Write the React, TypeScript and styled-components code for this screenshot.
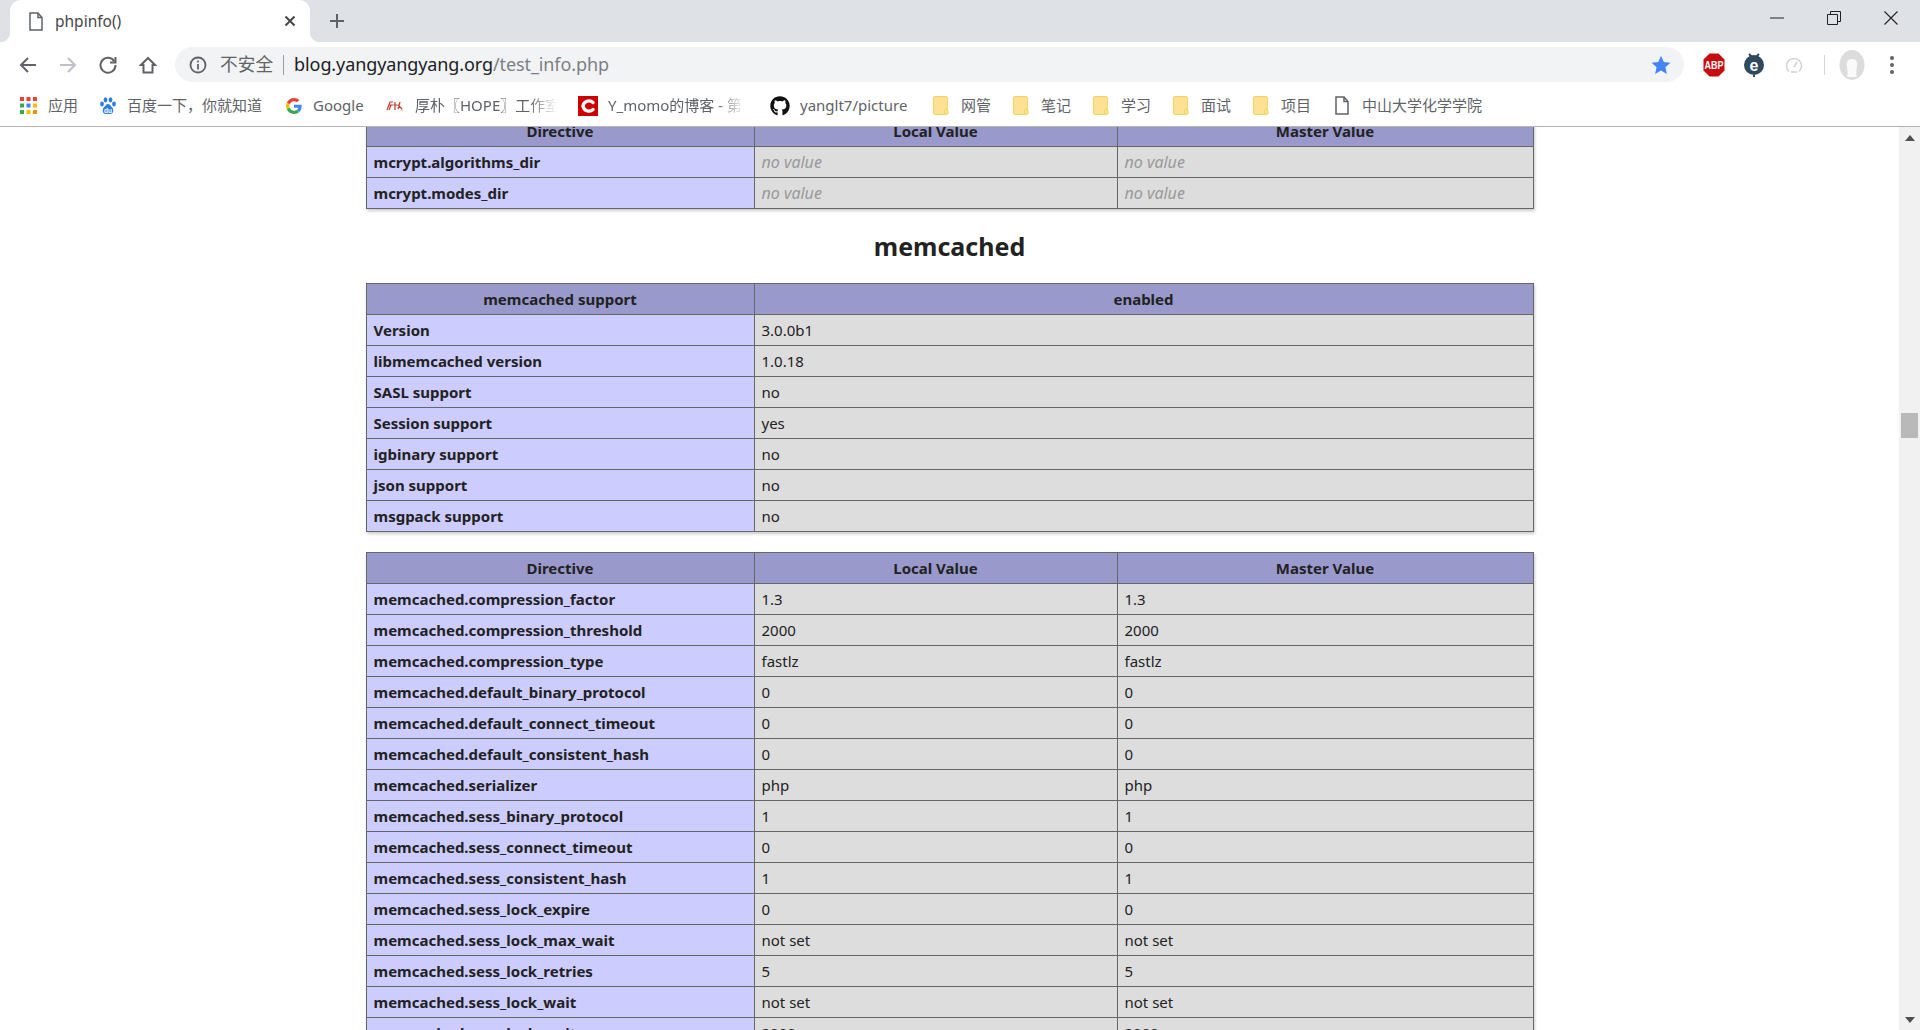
import React from "react";
import styled, { createGlobalStyle } from "styled-components";
import { FaGithub } from "react-icons/fa";

const Global = createGlobalStyle`
  html, body { margin: 0; padding: 0; height: 1030px; overflow: hidden; background: #fff; }
  * { box-sizing: border-box; }
  body { font-family: "Noto Sans", "Noto Sans CJK SC", sans-serif; }
`;

const Shell = styled.div`display: flex; flex-direction: column; width: 1920px; height: 1030px; overflow: hidden;`;

const TabStrip = styled.div`display: flex; align-items: stretch; height: 42px; padding-right: 1px; background: #dee1e6; flex: none;`;
const Tab = styled.div`
  position: relative; display: flex; align-items: center; width: 300px; margin-left: 10px; padding-left: 18px;
  background: #fff; border-radius: 11px 11px 0 0;
  &::before, &::after { content: ""; position: absolute; bottom: 0; width: 10px; height: 10px; }
  &::before { left: -10px; background: radial-gradient(circle at 0 0, #dee1e6 10px, #fff 10.5px); }
  &::after { right: -10px; background: radial-gradient(circle at 100% 0, #dee1e6 10px, #fff 10.5px); }
`;
const TabTitle = styled.span`margin-left: 11px; flex: 1; font-size: 15.5px; color: #45474a;`;
const TabClose = styled.span`display: flex; width: 18px; height: 18px; margin-right: 11px; align-items: center; justify-content: center;`;
const NewTab = styled.span`display: flex; width: 20px; align-items: center; justify-content: center; margin-left: 17px;`;
const StripSpacer = styled.div`flex: 1;`;
const WinBtn = styled.span`display: flex; width: 57px; align-items: center; justify-content: center; margin-top: -6px;`;

const Toolbar = styled.div`display: flex; height: 45px; padding: 5px 0 5px 8px; flex: none; background: #fff;`;
const NavBtn = styled.span`display: flex; width: 40px; align-items: center; justify-content: center;`;
const Omnibox = styled.div`
  display: flex; align-items: center; width: 1509px; height: 35px; margin-left: 7px; padding: 0 13px 0 14px;
  background: #f1f3f4; border-radius: 18px;
`;
const Insecure = styled.span`margin-left: 13px; font-size: 17.7px; line-height: 35px; color: #5f6368; white-space: nowrap;`;
const OmniDivider = styled.span`width: 1px; height: 20px; margin: 0 10px 0 10px; background: #9aa0a6;`;
const Url = styled.span`flex: 1; font-size: 18px; line-height: 35px; color: #202124; white-space: nowrap; letter-spacing: -0.1px;`;
const UrlPath = styled.span`color: #7b8085;`;
const ToolSlot = styled.span<{ $ml?: number }>`display: flex; width: 40px; align-items: center; justify-content: center; margin-left: ${p => p.$ml ?? 0}px;`;
const ToolDivider = styled.span`width: 1px; height: 20px; align-self: center; margin: 0 7px 0 10px; background: #d4d6d9;`;

const BookmarkBar = styled.div`display: flex; align-items: center; height: 40px; padding: 0 0 2px 20px; border-bottom: 1px solid #b5b5b5; flex: none; background: #fff;`;
const Bookmark = styled.div<{ $w: number; $gap?: number }>`
  display: flex; align-items: center; width: ${p => p.$w}px; gap: ${p => p.$gap ?? 12}px; flex: none;
  svg { flex: none; }
`;
const BookmarkLabel = styled.span<{ $fade?: number }>`
  margin-top: -2px; font-size: 15px; line-height: 20px; color: #5f6368; white-space: nowrap; overflow: hidden;
  ${p => p.$fade ? `width: ${p.$fade}px; -webkit-mask-image: linear-gradient(to right, #000 80%, transparent 100%); mask-image: linear-gradient(to right, #000 80%, transparent 100%);` : ""}
`;

const Main = styled.div`display: flex; flex: 1; min-height: 0;`;
const Page = styled.div`flex: 1; min-width: 0; overflow: hidden; color: #222;`;
const Table = styled.table<{ $top?: number; $bottom?: number }>`
  width: 1167px; margin: ${p => p.$top ?? 0}px auto ${p => p.$bottom ?? 0}px; border-collapse: collapse; table-layout: fixed;
  box-shadow: 1px 2px 3px #ccc; font-size: 15px;
`;
const Row = styled.tr`height: 31px;`;
const Head = styled.th`border: 1px solid #666; padding: 0 7px; background: #99c; font-weight: 700; text-align: center; line-height: 20px;`;
const Key = styled.td`border: 1px solid #666; padding: 0 7px; background: #ccf; font-weight: 700; line-height: 20px; white-space: nowrap;`;
const Val = styled.td<{ $none?: boolean }>`
  border: 1px solid #666; padding: 0 7px; background: #ddd; line-height: 20px;
  ${p => p.$none ? "color: #999; font-style: italic; font-size: 16px;" : ""}
`;
const Section = styled.h2`margin: 0; height: 74px; font-size: 25px; line-height: 75px; font-weight: 700; text-align: center; color: #222;`;

const Scrollbar = styled.div`display: flex; flex-direction: column; align-items: center; width: 21px; background: #f1f1f1; flex: none;`;
const ScrollArrow = styled.span`display: flex; height: 21px; align-items: center; justify-content: center;`;
const Thumb = styled.div`width: 17px; height: 25px; margin-top: 265px; background: #b9b9b9;`;
const ScrollGap = styled.div`flex: 1;`;

const FileIcon = () => (
  <svg width="16" height="19" viewBox="0 0 16 19" fill="none" stroke="#5f6368" strokeWidth="1.5">
    <path d="M2 1h8l4 4.5V18H2z" /><path d="M10 1v4.5h4" />
  </svg>
);
const Folder = () => (
  <svg width="16" height="19" viewBox="0 0 16 19">
    <rect x="0.5" y="0.5" width="14" height="18" rx="1.5" fill="#fde293" stroke="#f6d262" />
    <rect x="11.5" y="13" width="3.5" height="5.5" rx="1.5" fill="#fde293" stroke="#f6d262" />
  </svg>
);
const Apps = () => {
  const c = ["#ea4335", "#ea4335", "#ea4335", "#34a853", "#4285f4", "#fbbc05", "#34a853", "#fbbc05", "#fb8c00"];
  return (
    <svg width="17" height="17" viewBox="0 0 17 17">
      {c.map((f, i) => <rect key={i} x={(i % 3) * 6.5} y={Math.floor(i / 3) * 6.5} width="4" height="4" fill={f} />)}
    </svg>
  );
};
const Baidu = () => (
  <svg width="16" height="18" viewBox="0 0 16 18" fill="#2f7de1">
    <ellipse cx="2" cy="7" rx="1.9" ry="2.4" /><ellipse cx="5.5" cy="2.8" rx="1.9" ry="2.6" />
    <ellipse cx="10.5" cy="2.8" rx="1.9" ry="2.6" /><ellipse cx="14" cy="7" rx="1.9" ry="2.4" />
    <path d="M8 7c2 0 2.6 2 4 3.2 2 1.7 2 6.8-2 6.8-1 0-1.4-.3-2-.3s-1 .3-2 .3c-4 0-4-5.1-2-6.8C5.4 9 6 7 8 7z" />
    <text x="8" y="15.5" fontSize="6.5" fontWeight="700" fill="#fff" textAnchor="middle" fontFamily="Liberation Sans">du</text>
  </svg>
);
const GoogleG = () => (
  <svg width="16" height="16" viewBox="0 0 48 48">
    <path fill="#EA4335" d="M24 9.5c3.5 0 6.700 1.200 9.200 3.600l6.900-6.900C35.900 2.400 30.500 0 24 0 14.600 0 6.500 5.400 2.600 13.300l8 6.200C12.500 13.700 17.800 9.500 24 9.500z" />
    <path fill="#4285F4" d="M47 24.500c0-1.600-.1-3.100-.4-4.500H24v9h13c-.6 3-2.300 5.500-4.800 7.200l7.700 6C44.400 38 47 31.800 47 24.500z" />
    <path fill="#FBBC05" d="M10.500 28.600c-.5-1.400-.8-3-.8-4.600s.3-3.200.8-4.600l-8-6.200C.9 16.500 0 20.100 0 24s.9 7.500 2.600 10.800l7.900-6.200z" />
    <path fill="#34A853" d="M24 48c6.500 0 11.900-2.100 15.900-5.800l-7.700-6c-2.100 1.400-4.900 2.300-8.200 2.300-6.200 0-11.500-4.200-13.400-9.900l-8 6.200C6.500 42.600 14.600 48 24 48z" />
  </svg>
);
const Houpu = () => (
  <svg width="18" height="12" viewBox="0 0 18 12" fill="none" stroke="#c0392b" strokeWidth="1.2">
    <path d="M1 10L4 2h3M3 5h4M5 5L3 10M9 2v8M7.500 5h4M14 2l-2 7M12 5l4 4M15.500 10h1" />
  </svg>
);
const CLogo = () => (
  <svg width="20" height="20" viewBox="0 0 20 20">
    <rect width="20" height="20" fill="#cc0000" />
    <path d="M15 6.500A6 6 0 0 0 5 10a6 6 0 0 0 10 3.500" fill="none" stroke="#fff" strokeWidth="3.400" strokeLinecap="round" />
  </svg>
);
const Abp = () => (
  <svg width="22" height="24" viewBox="0 0 22 24">
    <path d="M6.500 0.500h9l6 6v11l-6 6h-9l-6-6v-11z" fill="#c70d0d" />
    <text x="11" y="16" fontSize="10" fontWeight="700" fill="#fff" textAnchor="middle" textLength="19" lengthAdjust="spacingAndGlyphs" fontFamily="Liberation Sans">ABP</text>
  </svg>
);
const EIcon = () => (
  <svg width="22" height="24" viewBox="0 0 22 24">
    <circle cx="11" cy="12" r="10" fill="#2f4a5c" />
    <path d="M6 1l3 3M16 1l-3 3M11 22v2" stroke="#2f4a5c" strokeWidth="2" />
    <text x="11" y="17.500" fontSize="16" fontWeight="700" fill="#fff" textAnchor="middle" fontFamily="Liberation Sans">e</text>
  </svg>
);
const Gauge = () => (
  <svg width="18" height="16" viewBox="0 0 18 16" fill="none" stroke="#cfd1d3" strokeWidth="1.500">
    <path d="M4 14.500a7.500 7.500 0 1 1 10 0" /><path d="M9 10l3-5" /><path d="M6 15h6" />
  </svg>
);
const Avatar = () => (
  <svg width="26" height="30" viewBox="0 0 26 30">
    <ellipse cx="13" cy="15" rx="12.500" ry="15" fill="#dcdcdc" />
    <path d="M8 27c2-5-1-10 0-15 1-4 9-4 10 0 1 5-2 10 0 15z" fill="#fafafa" />
  </svg>
);

type R = [string, string, string];
const settings: R[] = [
  ["memcached.compression_factor", "1.3", "1.3"],
  ["memcached.compression_threshold", "2000", "2000"],
  ["memcached.compression_type", "fastlz", "fastlz"],
  ["memcached.default_binary_protocol", "0", "0"],
  ["memcached.default_connect_timeout", "0", "0"],
  ["memcached.default_consistent_hash", "0", "0"],
  ["memcached.serializer", "php", "php"],
  ["memcached.sess_binary_protocol", "1", "1"],
  ["memcached.sess_connect_timeout", "0", "0"],
  ["memcached.sess_consistent_hash", "1", "1"],
  ["memcached.sess_lock_expire", "0", "0"],
  ["memcached.sess_lock_max_wait", "not set", "not set"],
  ["memcached.sess_lock_retries", "5", "5"],
  ["memcached.sess_lock_wait", "not set", "not set"],
  ["memcached.sess_lock_wait_max", "2000", "2000"],
];
const support: [string, string][] = [
  ["Version", "3.0.0b1"], ["libmemcached version", "1.0.18"], ["SASL support", "no"], ["Session support", "yes"],
  ["igbinary support", "no"], ["json support", "no"], ["msgpack support", "no"],
];

const ThreeCols = () => (<colgroup><col width="388" /><col width="363" /><col width="416" /></colgroup>);
const DirectiveHead = () => (
  <Row><Head>Directive</Head><Head>Local Value</Head><Head>Master Value</Head></Row>
);

export default function App() {
  return (
    <Shell>
      <Global />
      <TabStrip>
        <Tab>
          <FileIcon />
          <TabTitle>phpinfo()</TabTitle>
          <TabClose>
            <svg width="12" height="12" viewBox="0 0 12 12" stroke="#45474a" strokeWidth="2"><path d="M1.500 1.500l9 9M10.500 1.500l-9 9" /></svg>
          </TabClose>
        </Tab>
        <NewTab>
          <svg width="16" height="16" viewBox="0 0 16 16" stroke="#5f6368" strokeWidth="2"><path d="M8 1v14M1 8h14" /></svg>
        </NewTab>
        <StripSpacer />
        <WinBtn><svg width="14" height="2" viewBox="0 0 14 2" stroke="#222"><path d="M0 1h14" /></svg></WinBtn>
        <WinBtn>
          <svg width="14" height="14" viewBox="0 0 14 14" fill="none" stroke="#222"><path d="M.5 3.500h10v10H.5z" /><path d="M3.500 3.500v-3h10v10h-3" /></svg>
        </WinBtn>
        <WinBtn>
          <svg width="14" height="14" viewBox="0 0 14 14" stroke="#222" strokeWidth="1.100"><path d="M.5.500l13 13M13.500.500l-13 13" /></svg>
        </WinBtn>
      </TabStrip>
      <Toolbar>
        <NavBtn>
          <svg width="18" height="18" viewBox="0 0 18 18" fill="none" stroke="#5f6368" strokeWidth="2"><path d="M17 9H2M9 2L2 9l7 7" /></svg>
        </NavBtn>
        <NavBtn>
          <svg width="18" height="18" viewBox="0 0 18 18" fill="none" stroke="#bdc1c6" strokeWidth="2"><path d="M1 9h15M9 2l7 7-7 7" /></svg>
        </NavBtn>
        <NavBtn>
          <svg width="18" height="18" viewBox="0 0 18 18" fill="none" stroke="#5f6368" strokeWidth="2"><path d="M15.500 5.500A7.500 7.500 0 1 0 16.500 9" /><path d="M16.500 1v5.500H11" /></svg>
        </NavBtn>
        <NavBtn>
          <svg width="18" height="18" viewBox="0 0 18 18" fill="none" stroke="#5f6368" strokeWidth="2"><path d="M9 2L2 9h2.500v7.500h9V9H16z" /></svg>
        </NavBtn>
        <Omnibox>
          <svg width="18" height="18" viewBox="0 0 18 18" fill="none" stroke="#5f6368" strokeWidth="1.800">
            <circle cx="9" cy="9" r="7.500" /><path d="M9 8v5.500M9 4.500v2" />
          </svg>
          <Insecure>不安全</Insecure>
          <OmniDivider />
          <Url>blog.yangyangyang.org<UrlPath>/test_info.php</UrlPath></Url>
          <svg width="20" height="20" viewBox="0 0 24 24" fill="#4285f4"><path d="M12 1l3.300 7.500 8 .8-6 5.400 1.800 8L12 18.500 4.900 22.700l1.800-8-6-5.400 8-.8z" /></svg>
        </Omnibox>
        <ToolSlot $ml={10}><Abp /></ToolSlot>
        <ToolSlot><EIcon /></ToolSlot>
        <ToolSlot><Gauge /></ToolSlot>
        <ToolDivider />
        <ToolSlot><Avatar /></ToolSlot>
        <ToolSlot><svg width="6" height="20" viewBox="0 0 6 20" fill="#5f6368"><circle cx="3" cy="3" r="2" /><circle cx="3" cy="10" r="2" /><circle cx="3" cy="17" r="2" /></svg></ToolSlot>
      </Toolbar>
      <BookmarkBar>
        <Bookmark $w={80} $gap={11}><Apps /><BookmarkLabel>应用</BookmarkLabel></Bookmark>
        <Bookmark $w={186} $gap={11}><Baidu /><BookmarkLabel>百度一下，你就知道</BookmarkLabel></Bookmark>
        <Bookmark $w={100} $gap={11}><GoogleG /><BookmarkLabel>Google</BookmarkLabel></Bookmark>
        <Bookmark $w={192} $gap={11}><Houpu /><BookmarkLabel $fade={142}>厚朴〖HOPE〗工作室</BookmarkLabel></Bookmark>
        <Bookmark $w={192} $gap={10}><CLogo /><BookmarkLabel $fade={137}>Y_momo的博客 - 第一</BookmarkLabel></Bookmark>
        <Bookmark $w={163} $gap={10}><FaGithub size={20} color="#111" /><BookmarkLabel>yanglt7/picture</BookmarkLabel></Bookmark>
        <Bookmark $w={80} $gap={12}><Folder /><BookmarkLabel>网管</BookmarkLabel></Bookmark>
        <Bookmark $w={80} $gap={12}><Folder /><BookmarkLabel>笔记</BookmarkLabel></Bookmark>
        <Bookmark $w={80} $gap={12}><Folder /><BookmarkLabel>学习</BookmarkLabel></Bookmark>
        <Bookmark $w={80} $gap={12}><Folder /><BookmarkLabel>面试</BookmarkLabel></Bookmark>
        <Bookmark $w={81} $gap={12}><Folder /><BookmarkLabel>项目</BookmarkLabel></Bookmark>
        <Bookmark $w={160} $gap={12}><FileIcon /><BookmarkLabel>中山大学化学学院</BookmarkLabel></Bookmark>
      </BookmarkBar>
      <Main>
        <Page>
          <Table $top={-12}>
            <ThreeCols />
            <tbody>
              <DirectiveHead />
              <Row><Key>mcrypt.algorithms_dir</Key><Val $none>no value</Val><Val $none>no value</Val></Row>
              <Row><Key>mcrypt.modes_dir</Key><Val $none>no value</Val><Val $none>no value</Val></Row>
            </tbody>
          </Table>
          <Section>memcached</Section>
          <Table $bottom={20}>
            <colgroup><col width="388" /><col width="779" /></colgroup>
            <tbody>
              <Row><Head>memcached support</Head><Head>enabled</Head></Row>
              {support.map(([k, v]) => <Row key={k}><Key>{k}</Key><Val>{v}</Val></Row>)}
            </tbody>
          </Table>
          <Table>
            <ThreeCols />
            <tbody>
              <DirectiveHead />
              {settings.map(([k, a, b]) => <Row key={k}><Key>{k}</Key><Val>{a}</Val><Val>{b}</Val></Row>)}
            </tbody>
          </Table>
        </Page>
        <Scrollbar>
          <ScrollArrow><svg width="10" height="6" viewBox="0 0 10 6" fill="#505050"><path d="M5 0l5 6H0z" /></svg></ScrollArrow>
          <Thumb />
          <ScrollGap />
          <ScrollArrow><svg width="10" height="6" viewBox="0 0 10 6" fill="#505050"><path d="M0 0h10L5 6z" /></svg></ScrollArrow>
        </Scrollbar>
      </Main>
    </Shell>
  );
}
